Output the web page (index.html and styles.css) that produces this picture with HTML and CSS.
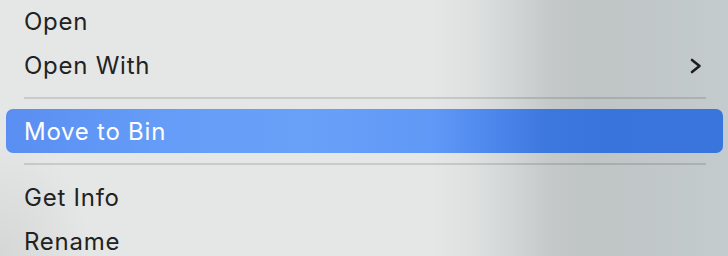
FILE: index.html
```html
<!DOCTYPE html>
<html lang="en">
<head>
<meta charset="utf-8">
<title>Context menu</title>
<link rel="stylesheet" href="styles.css">
</head>
<body>
<div class="menu">
  <div class="item"><span class="label">Open</span></div>
  <div class="item"><span class="label">Open With</span>
    <svg class="chevron" width="14" height="16" viewBox="0 0 14 16" aria-hidden="true"><path d="M3 2 L10.5 8 L3 14" fill="none" stroke="#1e1e1e" stroke-width="2.6" stroke-linecap="round" stroke-linejoin="round"/></svg>
  </div>
  <div class="sep"><div class="line"></div></div>
  <div class="item active"><span class="label">Move to Bin</span></div>
  <div class="sep"><div class="line"></div></div>
  <div class="item"><span class="label">Get Info</span></div>
  <div class="item"><span class="label">Rename</span></div>
</div>
</body>
</html>
```

FILE: styles.css
```css
html, body {
  margin: 0;
  padding: 0;
  width: 728px;
  height: 256px;
  overflow: hidden;
}
body {
  font-family: Inter, "Noto Sans", "Liberation Sans", sans-serif;
  background:
    radial-gradient(ellipse 90px 120px at 0 256px, rgba(0,0,0,0.07), rgba(0,0,0,0) 100%),
    linear-gradient(90deg, #e5e7e6 0px, #e5e7e6 430px, #dfe1e1 470px, #d2d6d6 510px, #c5c9c9 550px, #bfc4c4 590px, #c1c7c8 640px, #c4cbce 728px);
}
.menu {
  display: flex;
  flex-direction: column;
  margin-top: -1px;
}
.item {
  height: 44px;
  display: flex;
  align-items: center;
  justify-content: space-between;
  margin: 0 5px 0 6px;
  padding: 0 20px 0 18px;
  border-radius: 7px;
  color: #222;
  font-size: 24px;
  letter-spacing: 0.75px;
}
.label {
  line-height: 1;
  padding-top: 2px;
}
.item.active {
  color: #fff;
  background: linear-gradient(90deg, #5a8ef2 0px, #649cf7 150px, #69a1f9 300px, #5f98f6 430px, #4c86eb 490px, #3d78df 540px, #3874dc 600px, #3875dd 717px);
}
.chevron {
  display: block;
  margin-top: 1px;
}
.sep {
  height: 22px;
  display: flex;
  align-items: center;
  padding: 0 22px 0 24px;
}
.line {
  flex: 1;
  height: 2px;
  background: rgba(0,0,0,0.12);
}
```
